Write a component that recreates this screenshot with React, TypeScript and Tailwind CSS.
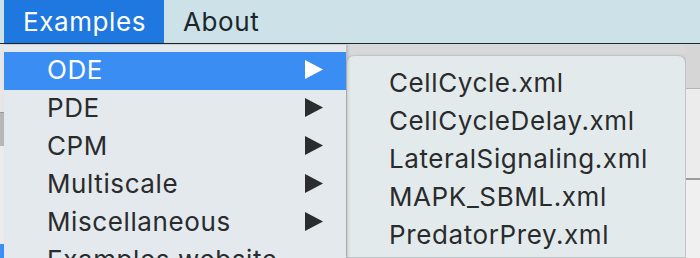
import React from "react";

const font = { fontFamily: "Inter, 'Noto Sans', sans-serif" };

function Tri({ white }: { white?: boolean }) {
  return (
    <svg width="18" height="19" viewBox="0 0 18 19" className="shrink-0">
      <polygon points="0,0 18,9.5 0,19" fill={white ? "#ffffff" : "#2a2c2d"} />
    </svg>
  );
}

const mainItems = ["ODE", "PDE", "CPM", "Multiscale", "Miscellaneous", "Examples website"];
const subItems = ["CellCycle.xml", "CellCycleDelay.xml", "LateralSignaling.xml", "MAPK_SBML.xml", "PredatorPrey.xml"];

export default function App() {
  return (
    <div
      className="w-[700px] h-[258px] overflow-hidden bg-[#e9e9e9] text-[26px] tracking-[0.6px] text-[#2a2b2c]"
      style={font}
    >
      <header className="flex h-[44px] bg-[#cde2e8] border-b border-[#1e2a2e]">
        <div className="w-[4px]" />
        <div className="w-[160px] bg-[#1f77e0] text-white pl-[19px] flex items-center">Examples</div>
        <div className="pl-[19px] flex items-center text-[#1c2628]">About</div>
      </header>
      <div className="flex h-[214px]">
        <div className="w-[4px] flex flex-col">
          <div className="h-[68px] bg-[#e6e6e6]" />
          <div className="h-[34px] bg-[#b7b7b7] border-t border-[#9a9a9a]" />
          <div className="h-[98px] bg-[#ececec]" />
          <div className="flex-1 bg-[#3b8ef5]" />
        </div>
        <div className="w-[342px] bg-[#e3e9ec] border-t border-[#c9cfd2] pt-[7px] shadow-[2px_0_3px_rgba(0,0,0,0.15)] z-10">
          {mainItems.map((t, i) => (
            <div
              key={t}
              className={`h-[38px] flex items-center pl-[43px] pr-[23px] pb-[3px] justify-between ${
                i === 0 ? "bg-[#3a8df3] text-white" : ""
              }`}
            >
              <span>{t}</span>
              {i < 5 && <Tri white={i === 0} />}
            </div>
          ))}
        </div>
        <div className="w-[340px] flex flex-col bg-[#d8d8d8]">
          <div className="h-[11px]" />
          <div className="flex-1 bg-[#e3eaec] rounded-t-[8px] border border-[#bfc5c8] pt-[7px] pl-[42px] shadow-[2px_2px_4px_rgba(0,0,0,0.2)]">
            {subItems.map((t) => (
              <div key={t} className="h-[38px] flex items-center">
                {t}
              </div>
            ))}
          </div>
        </div>
        <div className="flex-1 flex flex-col">
          <div className="h-[44px] bg-[#d6d6d6]" />
          <div className="h-[90px] bg-[#ececec] border-t border-[#b5b5b5]" />
          <div className="flex-1 bg-[#f0f0f0] border-t-2 border-[#9c9c9c]" />
        </div>
      </div>
    </div>
  );
}
